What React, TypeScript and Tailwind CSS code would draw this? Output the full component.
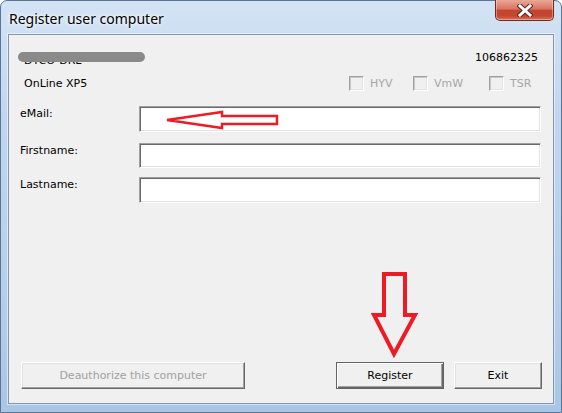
import React from 'react'

const sunken =
  'border border-t-[#a0a0a0] border-l-[#a0a0a0] border-r-white border-b-white shadow-[inset_1px_1px_0_#696969,inset_-1px_-1px_0_#e3e3e3] bg-white'

const raised =
  'border border-t-white border-l-white border-r-[#696969] border-b-[#696969] shadow-[inset_-1px_-1px_0_#a0a0a0,inset_1px_1px_0_#e3e3e3] bg-[#f0f0f0]'

const CheckBox: React.FC<{ label: string; className?: string }> = ({ label, className }) => (
  <div className={`flex items-center gap-[6px] text-[#a6a6a6] ${className ?? ''}`}>
    <span className="block shrink-0 w-[15px] h-[15px] border border-t-[#a0a0a0] border-l-[#a0a0a0] border-r-white border-b-white shadow-[inset_1px_1px_0_#c8c8c8,inset_-1px_-1px_0_#e3e3e3] bg-[#f0f0f0]" />
    <span>{label}</span>
  </div>
)

const Field: React.FC<{ label: string; className?: string; h: string }> = ({ label, className, h }) => (
  <div className={`flex items-start pl-[11px] pr-[12px] ${className ?? ''}`}>
    <span className="w-[119px] pt-[1px]">{label}</span>
    <div className={`flex-1 ${h} ${sunken}`} />
  </div>
)

const App: React.FC = () => {
  return (
    <div className="relative w-[562px] h-[413px] overflow-hidden bg-white">
      <div className="flex flex-col h-full rounded-t-[7px] border border-[#5b7597] bg-[linear-gradient(180deg,#d3e3f4_0%,#c0d6ee_30%,#b6cfea_70%,#aac6e6_100%)] px-[7px] pb-[8px]">
        {/* Title bar */}
        <div className="flex justify-between h-[33px]">
          <span className="pl-[1px] pt-[8px] font-['Noto_Sans',sans-serif] text-[14px] leading-[19px] text-black [text-shadow:0_0_6px_#fff,0_0_3px_#fff]">
            Register user computer
          </span>
          <div className="-mt-[1px] flex items-center justify-center w-[59px] h-[21px] rounded-b-[5px] border border-t-0 border-[#6e2b22] bg-[linear-gradient(180deg,#eaa897_0%,#d9735f_45%,#c4442d_52%,#c54630_80%,#dc7458_100%)] shadow-[inset_0_-1px_0_rgba(255,255,255,0.35),inset_1px_0_0_rgba(255,255,255,0.35),inset_-1px_0_0_rgba(255,255,255,0.35)]">
            <svg width="16" height="13" viewBox="0 0 16 13">
              <path d="M3 2 L13 11 M13 2 L3 11" stroke="#5a2a24" strokeWidth="5" strokeLinecap="square" />
              <path d="M3 2 L13 11 M13 2 L3 11" stroke="#ffffff" strokeWidth="3" strokeLinecap="square" />
            </svg>
          </div>
        </div>

        {/* Client area */}
        <div className="flex flex-col flex-1 border border-[#8296ae] bg-[#f0f0f0] font-['DejaVu_Sans',sans-serif] text-[11px] leading-[13px] text-black shadow-[0_0_0_1px_rgba(255,255,255,0.5)]">
          <div className="mt-[16px] flex justify-between h-[13px] pl-[15px] pr-[15px]">
            <div className="relative">
              <span className="block mt-[3px]">DTCO-DRL</span>
              <span className="absolute top-[1px] -left-[6px] w-[127px] h-[10px] rounded-full bg-[#8a8a8a]" />
            </div>
            <span>106862325</span>
          </div>

          <div className="mt-[12px] flex items-center justify-between h-[15px] pl-[15px] pr-[20px]">
            <span>OnLine XP5</span>
            <div className="flex items-center w-[184px]">
              <CheckBox label="HYV" className="w-[64px]" />
              <CheckBox label="VmW" className="w-[76px]" />
              <CheckBox label="TSR" className="w-[44px]" />
            </div>
          </div>

          <Field label="eMail:" className="mt-[15px]" h="h-[26px]" />
          <Field label="Firstname:" className="mt-[11px]" h="h-[25px]" />
          <Field label="Lastname:" className="mt-[9px]" h="h-[26px]" />

          <div className="mt-auto mb-[14px] flex items-center pl-[12px] pr-[11px]">
            <button className={`w-[224px] h-[27px] text-[#a0a0a0] ${raised}`}>Deauthorize this computer</button>
            <div className="flex-1" />
            <button className="w-[108px] h-[27px] border border-[#646464] bg-[#f0f0f0] shadow-[inset_1px_1px_0_#fff,inset_-1px_-1px_0_#696969,inset_-2px_-2px_0_#a0a0a0]">
              Register
            </button>
            <button className={`ml-[10px] w-[88px] h-[27px] ${raised}`}>Exit</button>
          </div>
        </div>
      </div>

      {/* Red annotation arrows */}
      <svg className="absolute inset-0 pointer-events-none" width="562" height="413" viewBox="0 0 562 413">
        <polygon
          points="167,120 222,112 222,116 277,116 277,124 222,124 222,128"
          fill="none"
          stroke="#ed1c24"
          strokeWidth="2.5"
          strokeLinejoin="miter"
        />
        <polygon
          points="384,274 405,274 405,315 415,315 394,354 374,315 384,315"
          fill="none"
          stroke="#ed1c24"
          strokeWidth="4"
          strokeLinejoin="miter"
        />
      </svg>
    </div>
  )
}

export default App
